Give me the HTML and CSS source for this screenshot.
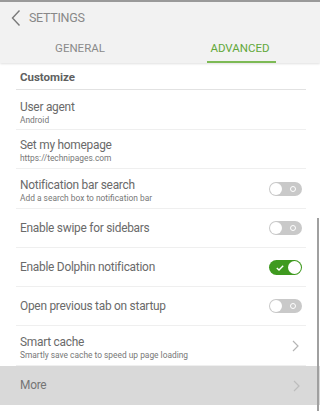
FILE: index.html
```html
<!DOCTYPE html>
<html>
<head>
<meta charset="utf-8">
<link rel="stylesheet" href="styles.css">
</head>
<body>
<div class="app">
  <header class="header">
    <div class="titlebar">
      <svg class="back" width="10" height="18" viewBox="0 0 10 18"><path d="M8.5 1.5 L1.5 9 L8.5 16.5" fill="none" stroke="#7a7a7a" stroke-width="1.4"/></svg>
      <span class="title">SETTINGS</span>
    </div>
    <nav class="tabs">
      <div class="tab">GENERAL</div>
      <div class="tab active">ADVANCED</div>
    </nav>
  </header>
  <main class="list">
    <div class="section">Customize</div>
    <div class="row two first"><div class="text"><div class="label">User agent</div><div class="sub">Android</div></div></div>
    <div class="row two short"><div class="text"><div class="label">Set my homepage</div><div class="sub">https://technipages.com</div></div></div>
    <div class="row two"><div class="text"><div class="label">Notification bar search</div><div class="sub">Add a search box to notification bar</div></div><span class="toggle"><span class="knob"></span><span class="ring"></span></span></div>
    <div class="row"><div class="text"><div class="label">Enable swipe for sidebars</div></div><span class="toggle"><span class="knob"></span><span class="ring"></span></span></div>
    <div class="row"><div class="text"><div class="label">Enable Dolphin notification</div></div><span class="toggle on"><svg class="check" width="8" height="6" viewBox="0 0 8 6"><path d="M0.8 3 L3 5 L7.2 0.8" fill="none" stroke="#fff" stroke-width="1.4"/></svg><span class="knob"></span></span></div>
    <div class="row"><div class="text"><div class="label">Open previous tab on startup</div></div><span class="toggle"><span class="knob"></span><span class="ring"></span></span></div>
    <div class="row two"><div class="text"><div class="label">Smart cache</div><div class="sub">Smartly save cache to speed up page loading</div></div><svg class="chev" width="7" height="12" viewBox="0 0 7 12"><path d="M1 1 L6 6 L1 11" fill="none" stroke="#b5b5b5" stroke-width="1.2"/></svg></div>
    <div class="row more"><div class="text"><div class="label">More</div></div><svg class="chev" width="7" height="12" viewBox="0 0 7 12"><path d="M1 1 L6 6 L1 11" fill="none" stroke="#bdbdbd" stroke-width="1.2"/></svg></div>
  </main>
  <div class="scrollbar"></div>
</div>
</body>
</html>
```
FILE: styles.css
```css
* { box-sizing: border-box; }
html, body { margin: 0; padding: 0; }
body {
  width: 320px;
  height: 411px;
  overflow: hidden;
  background: #fff;
  font-family: Roboto, "Noto Sans", sans-serif;
}
.app { position: relative; width: 320px; height: 411px; }
.header {
  background: #f2f2f2;
  border-top: 2px solid #9a9a9a;
  height: 63px;
  box-shadow: 0 1px 2px rgba(0,0,0,0.12);
  position: relative;
  z-index: 1;
}
.titlebar {
  height: 31px;
  display: flex;
  align-items: center;
  padding-left: 11px;
  gap: 8px;
}
.back { display: block; margin-top: 1px; }
.title {
  font-size: 12.5px;
  color: #888;
  letter-spacing: -0.3px;
}
.tabs {
  display: grid;
  grid-template-columns: 160px 160px;
  height: 30px;
}
.tab {
  text-align: center;
  font-size: 11.5px;
  color: #8a8a8a;
  padding-top: 8px;
  position: relative;
}
.tab.active { color: #62a83a; }
.tab.active::after {
  content: "";
  position: absolute;
  left: 47px;
  width: 69px;
  bottom: 0;
  height: 2px;
  background: #7dba55;
}
.list { padding: 0 14px 0 16px; }
.section {
  height: 27px;
  display: flex;
  align-items: center;
  padding: 2px 0 0 4px;
  font-size: 11.5px;
  font-weight: bold;
  color: #606060;
  border-bottom: 1px solid #e2e2e2;
}
.row {
  height: 39px;
  display: flex;
  align-items: center;
  justify-content: space-between;
  padding: 0 4px;
  border-bottom: 1px solid #efefef;
}
.row.two { height: 40px; }
.row.two.short { height: 39px; }
.label {
  font-size: 11.9px;
  letter-spacing: -0.25px;
  color: #6a6a6a;
  line-height: 15px;
}
.sub {
  font-size: 8.4px;
  color: #777;
  line-height: 10px;
  margin-top: 0;
}
.row.two .text { margin-top: 3px; }
.row.two.first .text { margin-top: 5px; }
.toggle {
  width: 33px;
  height: 14px;
  border-radius: 7px;
  background: #c9c9c9;
  position: relative;
  display: block;
}
.toggle .knob {
  position: absolute;
  left: 1px;
  top: 1px;
  width: 12px;
  height: 12px;
  border-radius: 50%;
  background: #fff;
}
.toggle .ring {
  position: absolute;
  right: 6px;
  top: 4px;
  width: 6px;
  height: 6px;
  border-radius: 50%;
  border: 1.2px solid #fff;
}
.toggle.on { background: #3f9a1f; height: 15px; border-radius: 8px; }
.toggle.on .knob { left: auto; right: 1px; width: 13px; height: 13px; }
.toggle.on .check { position: absolute; left: 7px; top: 5px; }
.chev { margin-right: 3px; }
.row.more {
  background: #d9d9d9;
  margin: 0 -14px 0 -16px;
  padding: 0 17px 0 20px;
  border-bottom: none;
}
.row.more .label { color: #757575; }
.scrollbar {
  position: absolute;
  right: 1px;
  top: 218px;
  width: 2px;
  height: 193px;
  background: #a0a0a0;
}
```
